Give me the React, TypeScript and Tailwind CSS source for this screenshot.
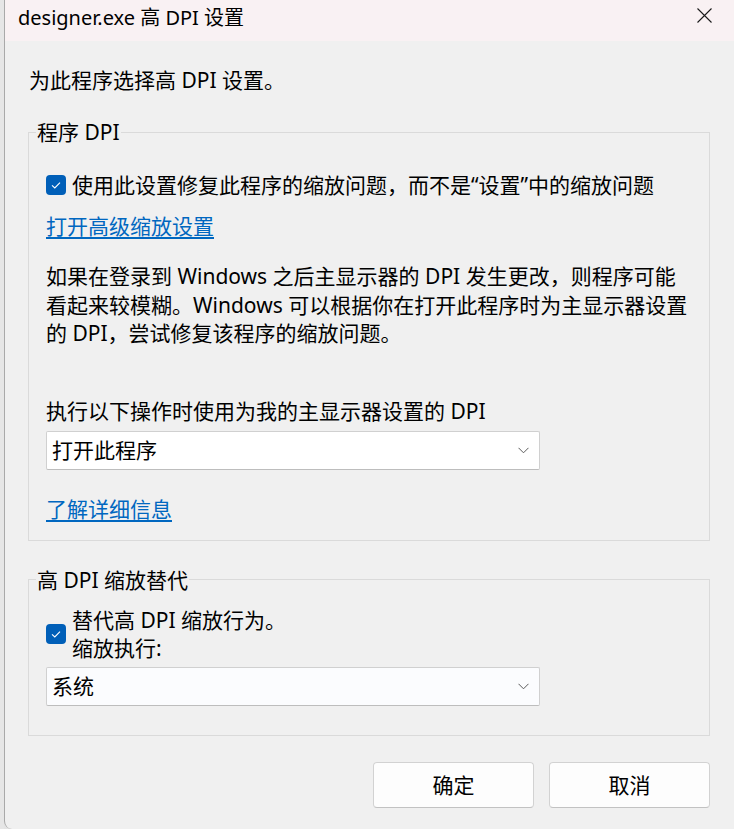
import React from "react";

function Check() {
  return (
    <div className="w-[20px] h-[20px] shrink-0 rounded-[4px] bg-[#005fb8] flex items-center justify-center">
      <svg width="20" height="20" viewBox="0 0 20 20">
        <path d="M6 10.3 L8.8 13 L14 7.6" fill="none" stroke="#ffffff" strokeWidth="1.1" />
      </svg>
    </div>
  );
}

function Select({ value, tint }: { value: string; tint?: boolean }) {
  return (
    <div
      className={
        "w-[494px] h-[39px] flex items-center justify-between pl-[5px] pr-[10px] border border-[#d0d0d0] border-b-[#bdbdbd] rounded-[2px] " +
        (tint ? "bg-[#fbfcfe]" : "bg-[#ffffff]")
      }
    >
      <span className="text-[21px] leading-[28px]">{value}</span>
      <svg width="11" height="7" viewBox="0 0 11 7">
        <path d="M0.5 0.8 L5.5 5.8 L10.5 0.8" fill="none" stroke="#5a5a5a" strokeWidth="1" />
      </svg>
    </div>
  );
}

export default function App() {
  return (
    <div className="w-[734px] h-[829px] flex bg-[#e4e4e4] text-[#000000] font-['Noto_Sans','Noto_Sans_CJK_SC',sans-serif]">
      <div className="w-[4px] shrink-0 bg-[#e6e6e6]" />
      <div className="flex-1 flex flex-col bg-[#f0f0f0] border-l border-[#a9a9a9] rounded-bl-[8px] overflow-hidden">
        <div className="h-[41px] shrink-0 bg-[#f9f1f3] flex items-center justify-between pl-[13px] pr-[22px]">
          <span className="text-[20px] leading-[26px] -mt-[6px]">designer.exe 高 DPI 设置</span>
          <svg width="15" height="15" viewBox="0 0 15 15" className="-mt-[10px]">
            <path d="M0.5 0.5 L14.5 14.5 M14.5 0.5 L0.5 14.5" stroke="#1a1a1a" strokeWidth="1.1" />
          </svg>
        </div>
        <div className="flex flex-col pl-[23px] pr-[24px]">
          <div className="mt-[25px] pl-[1px] text-[21px] leading-[28px]">为此程序选择高 DPI 设置。</div>

          <fieldset className="mt-[24px] border border-[#dadada] px-[17px] pb-[17px]">
            <legend className="-ml-[10px] px-[1px] text-[21px] leading-[28px]">程序 DPI</legend>
            <div className="mt-[25px] flex items-center gap-[6px]">
              <Check />
              <span className="text-[21px] leading-[28px] whitespace-nowrap">
                使用此设置修复此程序的缩放问题，而不是“设置”中的缩放问题
              </span>
            </div>
            <div className="mt-[13px] text-[21px] leading-[28px] text-[#0067c0] underline underline-offset-[3px]">
              打开高级缩放设置
            </div>
            <div className="mt-[22px] text-[21px] leading-[28.5px] whitespace-nowrap">
              如果在登录到 Windows 之后主显示器的 DPI 发生更改，则程序可能
              <br />
              看起来较模糊。Windows 可以根据你在打开此程序时为主显示器设置
              <br />
              的 DPI，尝试修复该程序的缩放问题。
            </div>
            <div className="mt-[49px] text-[21px] leading-[28px]">执行以下操作时使用为我的主显示器设置的 DPI</div>
            <div className="mt-[6px]">
              <Select value="打开此程序" />
            </div>
            <div className="mt-[25px] text-[21px] leading-[28px] text-[#0067c0] underline underline-offset-[3px]">
              了解详细信息
            </div>
          </fieldset>

          <fieldset className="mt-[25px] border border-[#dadada] px-[17px] pb-[29px]">
            <legend className="-ml-[10px] px-[1px] text-[21px] leading-[28px]">高 DPI 缩放替代</legend>
            <div className="mt-[12px] flex items-center gap-[6px]">
              <Check />
              <div className="text-[21px] leading-[28px]">
                <div>替代高 DPI 缩放行为。</div>
                <div>缩放执行:</div>
              </div>
            </div>
            <div className="mt-[5px]">
              <Select value="系统" tint />
            </div>
          </fieldset>

          <div className="mt-[26px] flex justify-end gap-[15px]">
            <div className="w-[161px] h-[46px] flex items-center justify-center bg-[#fdfdfd] border border-[#d2d2d2] border-b-[#c2c2c2] rounded-[4px] text-[21px] leading-[28px]">
              确定
            </div>
            <div className="w-[161px] h-[46px] flex items-center justify-center bg-[#fdfdfd] border border-[#d2d2d2] border-b-[#c2c2c2] rounded-[4px] text-[21px] leading-[28px]">
              取消
            </div>
          </div>
        </div>
      </div>
    </div>
  );
}
